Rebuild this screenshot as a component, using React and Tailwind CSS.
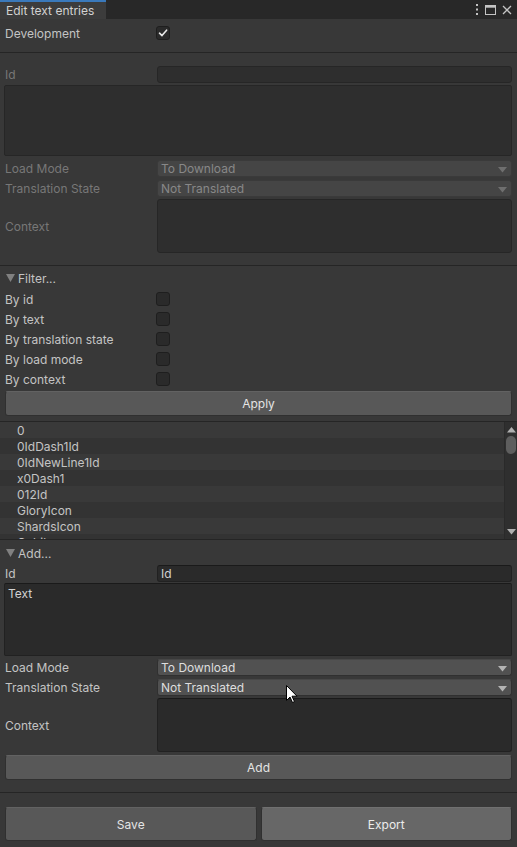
import React from "react";

function Check({ checked }) {
  return (
    <div className="w-[14px] h-[14px] -ml-[1px] rounded-[3px] bg-[#2a2a2a] border border-[#1e1e1e] flex items-center justify-center">
      {checked && (
        <svg width="10" height="10" viewBox="0 0 10 10">
          <path d="M1.5 5.2 L4 7.6 L8.6 2.2" stroke="#e8e8e8" strokeWidth="1.6" fill="none" strokeLinecap="round" strokeLinejoin="round" />
        </svg>
      )}
    </div>
  );
}

function Arrow({ color }) {
  return (
    <svg width="9" height="6" viewBox="0 0 9 6" className="absolute right-[4px] top-[6px]">
      <path d="M0 0 H9 L4.5 5.5 Z" fill={color} />
    </svg>
  );
}

function Dropdown({ text, disabled }) {
  return disabled ? (
    <div className="relative flex-1 h-[17px] rounded-[3px] bg-[#454545] border border-[#3a3a3a] text-[#888888] pl-[3px] leading-[16px]">
      {text}
      <Arrow color="#6f6f6f" />
    </div>
  ) : (
    <div className="relative flex-1 h-[17px] rounded-[3px] bg-[#515151] border border-[#303030] border-t-[#474747] text-[#dedede] pl-[3px] leading-[16px]">
      {text}
      <Arrow color="#b4b4b4" />
    </div>
  );
}

function Label({ children, disabled }) {
  return (
    <div className={disabled ? "w-[152px] shrink-0 pt-[1px] text-[#777777]" : "w-[152px] shrink-0 pt-[1px] text-[#c4c4c4]"}>
      {children}
    </div>
  );
}

function Foldout({ text }) {
  return (
    <div className="flex items-center h-[20px] pl-[6px] text-[#c4c4c4]">
      <svg width="9" height="8" viewBox="0 0 9 8" className="mr-[3px]">
        <path d="M0 0 H9 L4.5 8 Z" fill="#808080" />
      </svg>
      <span className="pt-[1px]">{text}</span>
    </div>
  );
}

function Sep() {
  return <div className="h-[1px] bg-[#252525]" />;
}

const items = ["0", "0IdDash1Id", "0IdNewLine1Id", "x0Dash1", "012Id", "GloryIcon", "ShardsIcon", "Cobile"];

export default function App() {
  return (
    <div className="relative w-[517px] h-[847px] bg-[#383838] text-[12px] font-['Inter','Liberation_Sans',sans-serif] overflow-hidden select-none">
      {/* Tab bar */}
      <div className="h-[19px] bg-[#282828] flex items-stretch">
        <div className="w-[106px] bg-[#3c3c3c] border-t-2 border-[#3a79bb] text-[#d2d2d2] pl-[6px] leading-[17px]">
          Edit text entries
        </div>
        <div className="flex-1" />
        <div className="flex items-center gap-[6px] pr-[5px]">
          <svg width="4" height="11" viewBox="0 0 4 11">
            <rect x="1" y="0" width="2" height="2" fill="#c4c4c4" />
            <rect x="1" y="4.5" width="2" height="2" fill="#c4c4c4" />
            <rect x="1" y="9" width="2" height="2" fill="#c4c4c4" />
          </svg>
          <svg width="11" height="10" viewBox="0 0 11 10">
            <rect x="0.5" y="0.5" width="10" height="9" fill="none" stroke="#c4c4c4" strokeWidth="1" />
            <rect x="0.5" y="0.5" width="10" height="2.2" fill="#c4c4c4" />
          </svg>
          <svg width="10" height="10" viewBox="0 0 10 10">
            <path d="M1 1 L9 9 M9 1 L1 9" stroke="#c4c4c4" strokeWidth="1.3" />
          </svg>
        </div>
      </div>

      <div className="px-[5px]">
        {/* Development */}
        <div className="mt-[5px] h-[18px] flex items-center">
          <Label>Development</Label>
          <Check checked />
        </div>
      </div>
      <div className="mt-[10px]"><Sep /></div>

      {/* Disabled edit section */}
      <div className="px-[5px]">
        <div className="mt-[12px] h-[18px] flex items-center">
          <Label disabled>Id</Label>
          <div className="flex-1 h-[17px] rounded-[3px] bg-[#2e2e2e] border border-[#262626]" />
        </div>
        <div className="mt-[2px] -ml-[1px] h-[71px] rounded-[2px] bg-[#2e2e2e] border border-[#262626]" />
        <div className="mt-[3px] h-[18px] flex items-center">
          <Label disabled>Load Mode</Label>
          <Dropdown text="To Download" disabled />
        </div>
        <div className="mt-[2px] h-[18px] flex items-center">
          <Label disabled>Translation State</Label>
          <Dropdown text="Not Translated" disabled />
        </div>
        <div className="mt-[2px] h-[54px] flex items-center">
          <Label disabled>Context</Label>
          <div className="flex-1 h-full rounded-[3px] bg-[#2e2e2e] border border-[#262626]" />
        </div>
      </div>
      <div className="mt-[12px]"><Sep /></div>

      {/* Filter */}
      <div className="mt-[2px]"><Foldout text="Filter..." /></div>
      <div className="px-[5px] mt-[1px]">
        {["By id", "By text", "By translation state", "By load mode", "By context"].map((t) => (
          <div key={t} className="h-[20px] flex items-center">
            <Label>{t}</Label>
            <Check />
          </div>
        ))}
        <div className="mt-[2px] h-[25px] rounded-[3px] bg-[#585858] border border-[#303030] border-t-[#626262] flex items-center justify-center text-[#e4e4e4] pt-[1px]">
          Apply
        </div>
      </div>

      {/* List */}
      <div className="mt-[5px] h-[119px] border-y border-[#252525] flex overflow-hidden">
        <div className="flex-1 flex flex-col overflow-hidden">
          {items.map((t, i) => (
            <div
              key={t}
              className={
                (i % 2 === 0 ? "bg-[#393939]" : "bg-[#333333]") +
                " h-[16px] shrink-0 pl-[17px] leading-[17px] text-[#c4c4c4]"
              }
            >
              {t}
            </div>
          ))}
        </div>
        <div className="w-[13px] bg-[#2f2f2f] border-l border-[#2a2a2a] flex flex-col items-center">
          <svg width="9" height="6" viewBox="0 0 9 6" className="mt-[5px]">
            <path d="M4.5 0 L9 5.5 H0 Z" fill="#b0b0b0" />
          </svg>
          <div className="mt-[3px] w-[10px] h-[18px] rounded-[5px] bg-[#5e5e5e]" />
          <div className="flex-1" />
          <svg width="9" height="6" viewBox="0 0 9 6" className="mb-[4px]">
            <path d="M0 0 H9 L4.5 5.5 Z" fill="#b0b0b0" />
          </svg>
        </div>
      </div>

      {/* Add */}
      <div className="mt-[3px]"><Foldout text="Add..." /></div>
      <div className="px-[5px]">
        <div className="mt-[1px] h-[18px] flex items-center">
          <Label>Id</Label>
          <div className="flex-1 h-[17px] rounded-[3px] bg-[#2a2a2a] border border-[#212121] border-t-[#1a1a1a] text-[#d2d2d2] pl-[3px] leading-[16px]">
            Id
          </div>
        </div>
        <div className="mt-[1px] -ml-[1px] h-[73px] rounded-[2px] bg-[#2a2a2a] border border-[#212121] border-t-[#1a1a1a] text-[#d2d2d2] pl-[3px] pt-[1px]">
          Text
        </div>
        <div className="mt-[2px] h-[18px] flex items-center">
          <Label>Load Mode</Label>
          <Dropdown text="To Download" />
        </div>
        <div className="mt-[2px] h-[18px] flex items-center">
          <Label>Translation State</Label>
          <Dropdown text="Not Translated" />
        </div>
        <div className="mt-[2px] h-[54px] flex items-center">
          <Label>Context</Label>
          <div className="flex-1 h-full rounded-[3px] bg-[#2a2a2a] border border-[#212121] border-t-[#1a1a1a]" />
        </div>
        <div className="mt-[3px] h-[25px] rounded-[3px] bg-[#585858] border border-[#303030] border-t-[#626262] flex items-center justify-center text-[#e4e4e4] pt-[1px]">
          Add
        </div>
      </div>
      <div className="mt-[12px]"><Sep /></div>

      <div className="px-[5px] mt-[14px] flex gap-[4px]">
        <div className="flex-1 h-[34px] rounded-[3px] bg-[#585858] border border-[#303030] border-t-[#626262] flex items-center justify-center text-[#e4e4e4] pt-[1px]">
          Save
        </div>
        <div className="flex-1 h-[34px] rounded-[3px] bg-[#676767] border border-[#303030] border-t-[#707070] flex items-center justify-center text-[#ececec] pt-[1px]">
          Export
        </div>
      </div>

      {/* Mouse cursor */}
      <svg width="12" height="19" viewBox="0 0 12 19" className="absolute left-[286px] top-[685px]">
        <path d="M0.5 0.5 V15.5 L4 12 L6.5 17.5 L8.5 16.6 L6 11.2 H11 Z" fill="#ffffff" stroke="#000000" strokeWidth="1" strokeLinejoin="round" />
      </svg>
    </div>
  );
}
